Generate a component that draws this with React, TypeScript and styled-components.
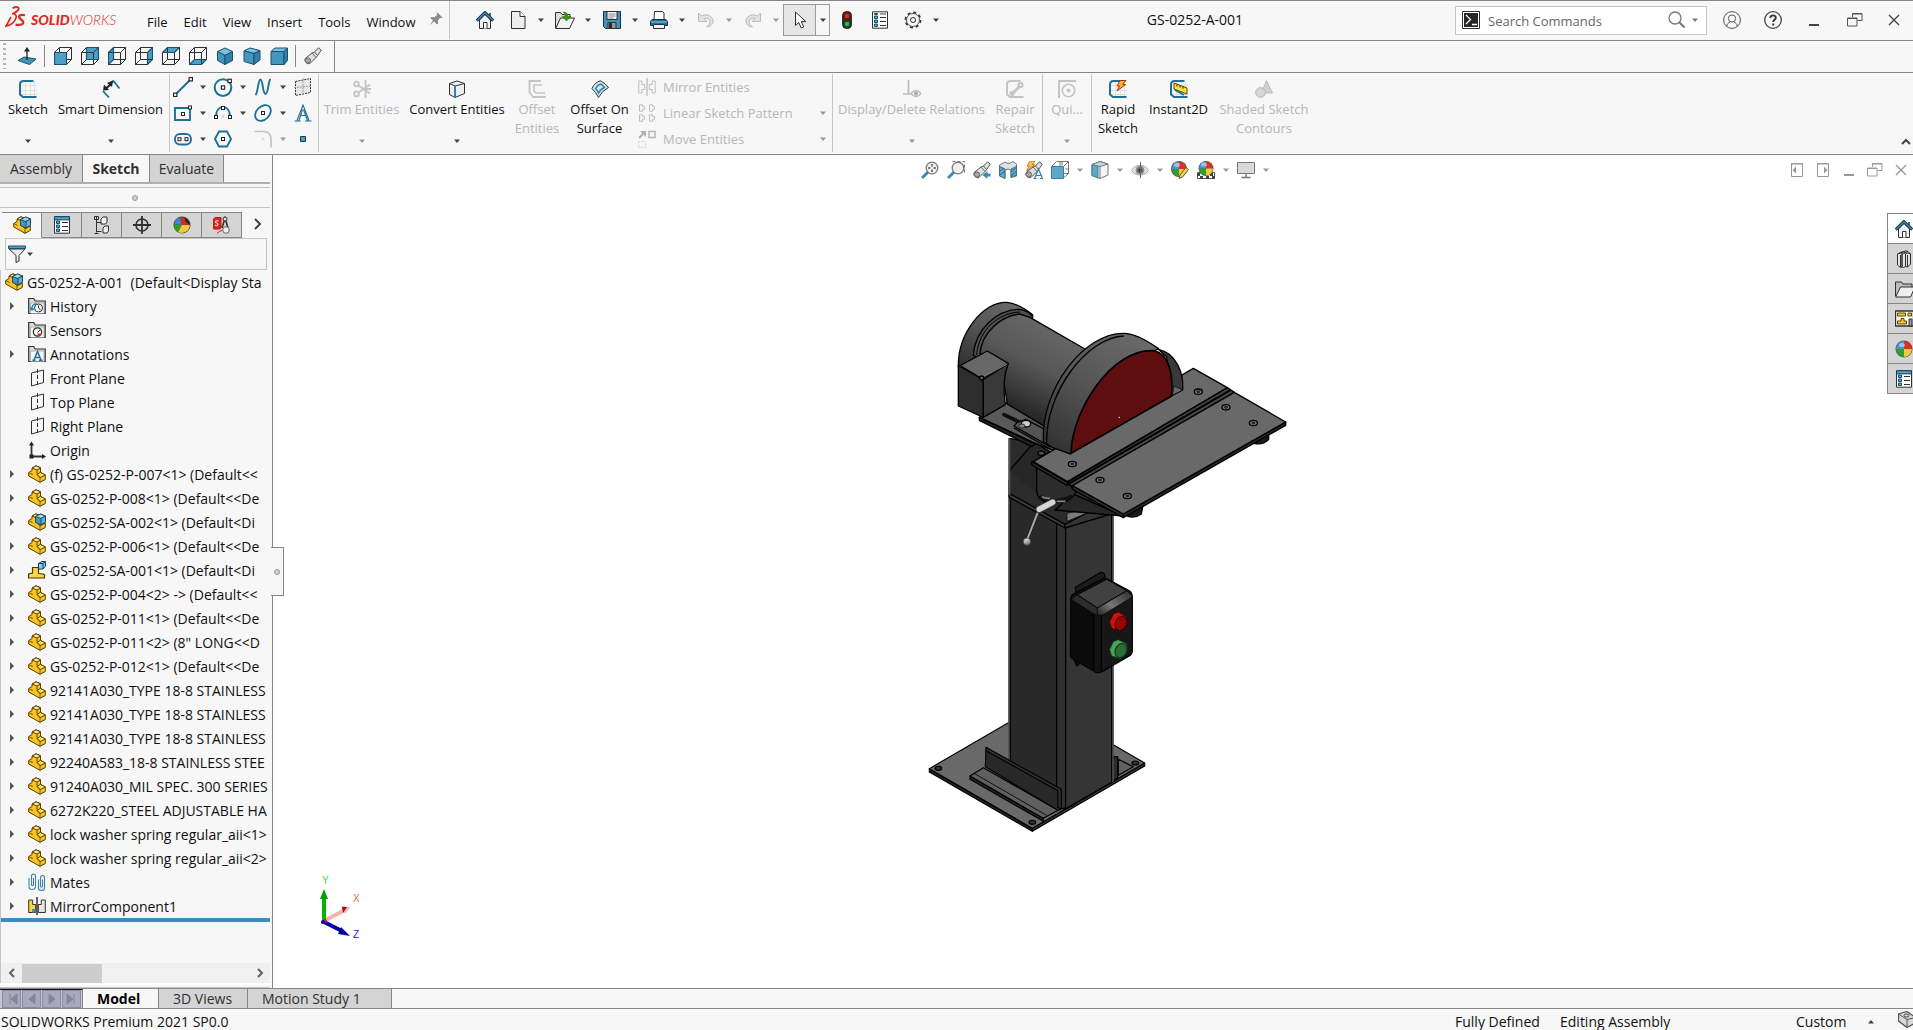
import React from "react";
import styled, { createGlobalStyle, css } from "styled-components";

const LINE = "#868686";
const SOFT = "#c6c6c6";
const PANEL = "#f7f7f7";
const TAB = "#d4d4d4";
const INK = "#303030";
const BLUE = "#1f7099";
const MID = "#5aa9cf";
const DIM = "#c4c4c4";

const Global = createGlobalStyle`
  *, *::before, *::after { box-sizing: border-box; }
  html, body { margin: 0; height: 100%; overflow: hidden; }
  body { font-family: "Open Sans", "Noto Sans", sans-serif; font-size: 14px; color: #101010; background: ${PANEL}; }
  #root { height: 100%; }
  button, input { font: inherit; color: inherit; margin: 0; padding: 0; border: 0; background: none; border-radius: 0; }
  ul { list-style: none; margin: 0; padding: 0; }
  h1 { margin: 0; font: inherit; }
  svg { display: block; flex: none; }
`;

/* ---------- layout ---------- */

const App_ = styled.div`
  display: flex;
  flex-direction: column;
  height: 100vh;
  overflow: hidden;
  background: ${PANEL};
  white-space: nowrap;
`;

const TitleBar = styled.header`
  display: flex;
  align-items: center;
  height: 41px;
  flex: none;
  padding-bottom: 1px;
  border-top: 1px solid ${LINE};
  border-bottom: 1px solid ${LINE};
`;

const Brand = styled.div`
  display: flex;
  align-items: center;
  gap: 5px;
  width: 139px;
  padding: 0 0 6px 5px;
  color: #da2a22;
  font-family: Lato, sans-serif;
  font-size: 14px;
  font-style: italic;
  font-weight: 300;
  line-height: 20px;
  b { font-weight: 900; }
  span { padding-top: 6px; }
`;

const Menu = styled.nav`
  display: flex;
  align-items: center;
  align-self: stretch;
  border-right: 1px solid ${SOFT};
  width: 311px;
  font-size: 13px;
`;

const MenuItem = styled.button`
  padding: 3px 8px 0;
  line-height: 20px;
`;

const Pin = styled.button`
  margin-left: auto;
  padding: 0 6px 2px 0;
`;

const QuickBar = styled.div`
  display: flex;
  align-items: center;
  padding-left: 18px;
`;

const IconButton = styled.button<{ $w?: number; $h?: number }>`
  display: flex;
  align-items: center;
  justify-content: center;
  flex: none;
  width: ${(p) => p.$w ?? 26}px;
  height: ${(p) => p.$h ?? 26}px;
`;

const SelectBox = styled.div`
  display: flex;
  height: 32px;
  border: 1px solid #9a9a9a;
  width: 47px;
  ${IconButton} { height: 30px; }
  ${IconButton}:first-child { background: #e6e6e6; border-right: 1px solid #9a9a9a; }
`;

const DocTitle = styled.h1`
  flex: 1;
  padding-right: 8px;
  text-align: center;
  font-size: 14px;
  line-height: 20px;
`;

const SearchBox = styled.label`
  display: flex;
  align-items: center;
  width: 252px;
  height: 29px;
  background: #fff;
  border: 1px solid ${SOFT};
  padding: 0 2px 0 6px;
  margin-right: 4px;
  input {
    flex: 1;
    min-width: 0;
    padding: 1px 0 0 8px;
    font-size: 13px;
    outline: none;
  }
  input::placeholder { color: #666; opacity: 1; }
`;

const ViewBar = styled.div`
  height: 32px;
  flex: none;
  border-bottom: 1px solid ${LINE};
`;

const ViewGroup = styled.div`
  display: flex;
  align-items: center;
  width: 335px;
  height: 31px;
  border-right: 1px solid ${LINE};
  padding: 0 0 1px 3px;
`;

const Grip = styled.span`
  width: 3px;
  height: 26px;
  margin-right: 7px;
  background: repeating-linear-gradient(#b5b5b5 0 2px, transparent 2px 5px);
`;

const Rule = styled.span<{ $m?: number }>`
  width: 1px;
  height: 22px;
  margin: 0 ${(p) => p.$m ?? 3}px;
  background: ${LINE};
`;

const Ribbon = styled.section`
  display: flex;
  height: 82px;
  flex: none;
  border-bottom: 1px solid ${LINE};
  font-size: 13px;
`;

const Group = styled.div<{ $pad?: number; $last?: boolean }>`
  display: flex;
  height: 78px;
  margin-top: 1px;
  padding-right: ${(p) => p.$pad ?? 0}px;
  border-right: ${(p) => (p.$last ? 0 : 1)}px solid ${SOFT};
`;

const BigButton = styled.button<{ $w: number; $off?: boolean }>`
  display: flex;
  flex-direction: column;
  align-items: center;
  flex: none;
  width: ${(p) => p.$w}px;
  padding-top: 6px;
  line-height: 19px;
  color: ${(p) => (p.$off ? "#b6b6b6" : "#101010")};
`;

const BigLabel = styled.span`
  height: 38px;
  margin: 2px 0 0;
  white-space: pre-line;
  text-align: center;
`;

const BigArrow = styled.span`
  display: flex;
  height: 6px;
  align-items: center;
`;

const ToolGrid = styled.div`
  display: grid;
  grid-template-columns: repeat(3, 26px 14px) 28px;
  grid-auto-rows: 26px;
`;

const RowList = styled.div`
  display: flex;
  flex-direction: column;
  width: 197px;
`;

const RowTool = styled.button`
  display: flex;
  align-items: center;
  height: 26px;
  gap: 7px;
  padding: 0 6px 0 3px;
  color: #b6b6b6;
  span:last-child { margin-left: auto; }
`;

const RibbonEnd = styled.div`
  display: flex;
  flex: 1;
  align-items: flex-end;
  justify-content: flex-end;
  padding-bottom: 2px;
`;

const Work = styled.main`
  display: flex;
  flex: 1;
  min-height: 0;
`;

const Side = styled.aside`
  position: relative;
  display: flex;
  flex-direction: column;
  width: 273px;
  flex: none;
  border-right: 1px solid ${LINE};
  background: ${PANEL};
`;

const CommandTabs = styled.div`
  display: flex;
  height: 29px;
  width: 270px;
  border-bottom: 2px solid #a9b2b5;
`;

const CommandTab = styled.button<{ $w: number; $on?: boolean }>`
  width: ${(p) => p.$w}px;
  border-right: 1px solid ${LINE};
  background: ${(p) => (p.$on ? PANEL : TAB)};
  font-weight: ${(p) => (p.$on ? 700 : 400)};
  color: #303030;
`;

const Splitter = styled.div`
  display: flex;
  align-items: center;
  justify-content: center;
  height: 21px;
  width: 270px;
  margin-top: 3px;
  border-top: 1px solid ${SOFT};
  border-bottom: 1px solid ${SOFT};
`;

const Dot = styled.span`
  width: 6px;
  height: 6px;
  border-radius: 3px;
  border: 1px solid #999;
  background: #d0d0d0;
`;

const ManagerTabs = styled.div`
  display: flex;
  height: 26px;
  width: 270px;
  margin-top: 4px;
  padding-left: 2px;
`;

const ManagerTab = styled.button<{ $on?: boolean }>`
  display: flex;
  align-items: center;
  justify-content: center;
  flex: none;
  width: 40px;
  border: 1px solid ${LINE};
  border-left: 0;
  background: ${(p) => (p.$on ? PANEL : TAB)};
  ${(p) => p.$on && css`border-bottom-color: ${PANEL};`}
`;

const Filter = styled.div`
  display: flex;
  align-items: center;
  height: 32px;
  width: 262px;
  margin-left: 5px;
  padding-left: 2px;
  border: 1px solid ${SOFT};
  button { display: flex; align-items: center; gap: 1px; }
  input { flex: 1; min-width: 0; align-self: stretch; outline: none; }
`;

const TreePane = styled.div`
  display: flex;
  flex-direction: column;
  flex: 1;
  min-height: 0;
  width: 270px;
  overflow: hidden;
  border-left: 1px solid ${SOFT};
`;

const TreeRow = styled.li<{ $root?: boolean }>`
  display: flex;
  align-items: center;
  height: 24px;
  padding-left: ${(p) => (p.$root ? 4 : 7)}px;
  white-space: pre;
`;

const Twist = styled.button`
  display: flex;
  align-items: center;
  justify-content: center;
  flex: none;
  width: 8px;
  height: 16px;
  margin-right: 12px;
`;

const NodeLabel = styled.span`
  margin-left: 4px;
`;

const Rollback = styled.div`
  height: 4px;
  flex: none;
  background: #3a8cc6;
`;

const HScroll = styled.div`
  display: flex;
  align-items: center;
  margin-top: auto;
  height: 20px;
  flex: none;
  background: #f0f0f0;
`;

const Thumb = styled.span`
  width: 80px;
  height: 19px;
  margin-right: auto;
  background: #cdcdcd;
`;

const SideFoot = styled.div`
  height: 5px;
  flex: none;
  width: 270px;
  border-top: 2px solid #fff;
  border-bottom: 1px solid ${SOFT};
`;

const Handle = styled.button`
  position: absolute;
  left: 271px;
  top: 392px;
  width: 13px;
  height: 49px;
  display: flex;
  align-items: center;
  justify-content: center;
  z-index: 1;
  background: ${PANEL};
  border: 1px solid ${LINE};
  border-left: 0;
`;

const Viewport = styled.section`
  position: relative;
  flex: 1;
  min-width: 0;
  overflow: hidden;
  background: #fff;
`;

const Scene = styled.svg`
  position: absolute;
  inset: 0;
  width: 100%;
  height: 100%;
`;

const Triad = styled.svg`
  position: absolute;
  left: 37px;
  bottom: 43px;
`;

const HeadsUp = styled.div`
  position: relative;
  display: flex;
  justify-content: center;
  padding-top: 2px;
  padding-left: 4px;
`;

const DocControls = styled.div`
  position: absolute;
  right: -1px;
  top: 2px;
  display: flex;
`;

const TaskPane = styled.nav`
  position: absolute;
  right: 0;
  top: 58px;
  width: 26px;
  border-left: 1px solid ${LINE};
  border-top: 1px solid ${LINE};
`;

const TaskButton = styled.button<{ $on?: boolean }>`
  display: flex;
  align-items: center;
  width: 100%;
  height: 30px;
  padding-left: 7px;
  overflow: hidden;
  border-bottom: 1px solid ${LINE};
  background: ${(p) => (p.$on ? "#fff" : TAB)};
`;

const SheetBar = styled.nav`
  display: flex;
  height: 21px;
  flex: none;
  border-top: 1px solid ${LINE};
  border-bottom: 1px solid ${LINE};
`;

const SheetNav = styled.div`
  display: flex;
  gap: 1px;
  width: 83px;
  padding: 0 1px 0 2px;
  background: #c6c6d2;
  border-top: 1px solid #111;
  border-right: 1px solid ${LINE};
`;

const SheetStep = styled.button`
  display: flex;
  flex: 1;
  align-items: center;
  justify-content: center;
  background: #a9a9bd;
  border: 1px solid #8c8ca0;
`;

const SheetTab = styled.button<{ $w: number; $on?: boolean }>`
  width: ${(p) => p.$w}px;
  padding-left: 14px;
  text-align: left;
  line-height: 19px;
  border-right: 1px solid ${LINE};
  background: ${(p) => (p.$on ? PANEL : TAB)};
  font-weight: ${(p) => (p.$on ? 700 : 400)};
  color: ${(p) => (p.$on ? "#000" : "#303030")};
`;

const Status = styled.footer`
  display: flex;
  height: 21px;
  flex: none;
  padding: 3px 0 0 1px;
  line-height: 20px;
  overflow: hidden;
`;

const Product = styled.span`
  margin-right: auto;
`;

const StatusCell = styled.span<{ $w: number }>`
  width: ${(p) => p.$w}px;
`;

const StatusMenu = styled.button`
  display: flex;
  align-items: center;
  gap: 22px;
  width: 105px;
  height: 20px;
`;

/* ---------- icons ---------- */

type IconProps = { s?: number; children: React.ReactNode };
const Ic = ({ s = 18, children }: IconProps) => (
  <svg width={s} height={s} viewBox="0 0 18 18" fill="none" stroke={INK} strokeWidth="1" aria-hidden="true">
    {children}
  </svg>
);

const Caret = ({ c = "#404040", up = false }: { c?: string; up?: boolean }) => (
  <svg width="6" height="4" viewBox="0 0 6 4" aria-hidden="true">
    <path d={up ? "M0 3.5h6L3 0z" : "M0 .5h6L3 4z"} fill={c} />
  </svg>
);

const Logo = () => (
  <svg width="21" height="22" viewBox="0 0 21 22" fill="none" stroke="#da2a22" aria-hidden="true">
    <path d="M7.5 2.2C11 .6 14 .7 13.6 2.9 13.3 4.700 10.500 6.500 8.500 7.500" strokeWidth="2" />
    <path d="M7 7.600C10.500 7.700 12 9.500 10.800 12.500 9.300 16.500 5 19.200 1 20.300L6 11" strokeWidth="1.700" />
    <path d="M20 9.300C17 8.500 13.800 9 14 11 14.300 13 19 14.500 18.300 17 17.500 19.300 13.500 19 10.500 18.600" strokeWidth="2.200" />
  </svg>
);

const House = () => (
  <Ic>
    <path d="M3.500 9v8.500h11V9L9 3.500z" fill="#f2f2f2" />
    <path d="M7.500 17.500v-6h3.500v6" fill="#fff" />
    <path d="M.8 9.600 9 1.600l8.200 8" stroke="#12374a" strokeWidth="3" />
    <path d="M1.300 9.300 9 1.900l7.700 7.400" stroke="#3d8fb8" strokeWidth="1.200" />
    <path d="M14 2v3" stroke="#12374a" strokeWidth="1.500" />
  </Ic>
);
const NewDoc = () => (
  <Ic>
    <path d="M2.500.5h8.500l5 5v12H2.500z" fill="#eee" />
    <path d="M11 .5v5h5" fill="#fff" />
  </Ic>
);
const Open = () => (
  <svg width="20" height="18" viewBox="0 0 20 18" fill="none" stroke={INK} aria-hidden="true">
    <path d="M.5 17V1.500h5l1.500 2h8V7" fill="#ddd" />
    <path d="M.7 17.500 5.500 7h14l-5 10.500z" fill="#f1f1f1" />
    <path d="M8 1c3.500 0 5 1.500 5 4.500h2.800L11.500 10 7.300 5.500H10C10 3 9.500 2 8 1z" fill="#3d9a10" stroke="#2c7808" strokeWidth=".6" />
  </svg>
);
const Save = () => (
  <Ic>
    <path d="M.5.5h17v17H2.500l-2-2z" fill="#4193bc" stroke="#123748" />
    <path d="M4 .5h10v8H4z" fill="#f5f5f5" />
    <path d="M5.500 3h7M5.500 5h7M5.500 7h5" stroke="#888" />
    <path d="M5 11.500h8v6H5z" fill="#999" />
    <path d="M6.500 12.500h2v5h-2z" fill="#222" />
  </Ic>
);
const Print = () => (
  <Ic>
    <path d="M4.500.5h8l1.500 1.500v6.500H4z" fill="#fff" />
    <path d="M2 8.500h14l1.500 2v4H.5v-4z" fill={BLUE} stroke="#123748" />
    <path d="M1 11h16" stroke="#8fcbe6" />
    <path d="M3.500 13.500h11v4h-11z" fill="#f4f4f4" />
  </Ic>
);
const Undo = ({ flip = false }) => (
  <Ic>
    <g transform={flip ? "matrix(-1 0 0 1 18 0)" : undefined} fill="#e2e2e2" stroke="#b9b9b9">
      <path d="M1.500 2v8.500H10L7 7.700c4-1.500 7 1 5.500 5.300L9.500 16c6-.5 8-5.500 5.500-9C12.500 3.500 8 3 4.500 5z" />
    </g>
  </Ic>
);
const Cursor = () => (
  <Ic>
    <path d="M4.500 1v13.500l3.300-3 2.400 5.500 2.500-1-2.400-5.400h4.500z" fill="#fff" />
  </Ic>
);
const Traffic = () => (
  <Ic>
    <rect x="4.500" y=".5" width="9" height="17" rx="4" fill="#2a2a2a" />
    <circle cx="9" cy="5" r="2.800" fill="#e5281c" stroke="#7d0d08" />
    <circle cx="9" cy="13" r="2.800" fill="#3fae3a" stroke="#14520f" />
  </Ic>
);
const ListIcon = ({ head = false }) => (
  <Ic>
    <path d="M1.500.8h15v16.400h-15z" fill="#fff" />
    {head && <path d="M1.500.8h15v3h-15z" fill={MID} stroke="#12374a" />}
    <path d="M3.500 5h3v2.500h-3zM3.500 9h3v2.500h-3zM3.500 13h3v2.500h-3z" fill={MID} stroke="#12506f" />
    <path d="M9 6.500h6M9 10.500h6M9 14.500h6" />
    {!head && <path d="M3.500 2.500h3v1h-3zM9 3h6" stroke="#12506f" />}
  </Ic>
);
const Gear = () => (
  <Ic>
    <circle cx="9" cy="9" r="7.500" strokeWidth="1.800" strokeDasharray="3 2.890" />
    <circle cx="9" cy="9" r="6.500" fill="#f7f7f7" strokeWidth="1" stroke="#555" />
    <circle cx="9" cy="9" r="2.500" />
  </Ic>
);
const PinIcon = () => (
  <svg width="14" height="14" viewBox="0 0 14 14" fill="#8b8b8b" aria-hidden="true">
    <path d="M8.500.500 13.500 5.500 12 6.300 11 5.800 9 8.500 9.200 11.500 8 12.500 5 9.500 .5 13.500 4 8.500 1.500 6 2.500 5 5.500 5.200 8.200 3 7.700 2z" />
  </svg>
);
const Prompt = () => (
  <Ic>
    <path d="M.5.5h17v17H.5z" fill="#fff" />
    <path d="M2 2h14v14H2z" fill="#23272c" stroke="none" />
    <path d="m4 4 4.500 4.500L4 13M10 13.500h5" stroke="#fff" strokeWidth="1.300" />
  </Ic>
);
const Lens = () => (
  <Ic>
    <circle cx="8" cy="7" r="6" stroke="#777" strokeWidth="1.300" />
    <path d="m12.500 11.500 5 5" stroke="#777" strokeWidth="2" />
  </Ic>
);
const User = () => (
  <Ic>
    <circle cx="9" cy="9" r="8.400" stroke="#555" />
    <circle cx="9" cy="7.500" r="3.600" stroke="#555" />
    <path d="M4 15c0-2 1-3 3-4M14 15c0-2-1-3-3-4" stroke="#555" />
  </Ic>
);
const Help = () => (
  <Ic>
    <circle cx="9" cy="9" r="8.300" strokeWidth="1.300" stroke="#444" />
    <path d="M6.300 7c0-3.500 5.500-3.400 5.500-.3C11.800 8.800 9.200 8.700 9.200 11" strokeWidth="1.900" stroke="#333" />
    <path d="M8.200 12.500h2v2h-2z" fill="#333" stroke="none" />
  </Ic>
);
const Mini = ({ c = "#444" }) => (
  <Ic><path d="M4 14h10" stroke={c} strokeWidth="2" /></Ic>
);
const Restore = ({ c = "#555" }) => (
  <Ic>
    <path d="M6.500 6V2.500h9.500v7h-4.500M6 3h10" stroke={c} />
    <path d="M1.500 7h9.500v8H1.500z" stroke={c} />
    <path d="M1.500 7.500h9.500" stroke={c} />
  </Ic>
);
const Close = ({ c = "#444" }) => (
  <Ic><path d="m4 4 10 10M14 4 4 14" stroke={c} strokeWidth="1.400" /></Ic>
);
const PaneArrow = ({ right = false }) => (
  <Ic>
    <path d="M3.500 2.500h11v13h-11zM3 3h12" stroke="#999" />
    <path d={right ? "M10 5.500v7l3.500-3.500z" : "M8 5.500v7L4.500 9z"} fill="#999" stroke="none" />
  </Ic>
);

const NormalTo = () => (
  <Ic>
    <path d="M0 13.500 6 10l12 2-6.500 5.500z" fill="#3f93bb" stroke="#17526f" />
    <path d="M9 13V2" stroke="#222" strokeWidth="1.300" />
    <path d="M6 4.500 9 0l3 4.500z" fill="#222" stroke="none" />
  </Ic>
);

const faces: Record<string, string> = {
  front: "M.5 5.500h12v12H.5z",
  back: "M5.500.5h12v12h-12z",
  left: "M.5 5.500l5-5v12l-5 5z",
  right: "M12.500 5.500l5-5v12l-5 5z",
  top: "M.5 5.500l5-5h12l-5 5z",
  bottom: "M.5 17.500l5-5h12l-5 5z",
};
const ViewCube = ({ face }: { face: string }) => (
  <Ic>
    {face !== "front" && <path d={faces[face]} fill="#4d9fc6" stroke="none" />}
    <path d="M5.500.5h12v12h-12zM.5 5.500l5-5M12.500 5.500l5-5M12.500 17.500l5-5M.5 17.500l5-5" />
    <path d="M.5 5.500h12v12H.5z" fill={face === "front" ? "#4d9fc6" : "none"} />
    <path d={faces[face]} stroke="#17526f" strokeWidth="1.200" />
  </Ic>
);
const SolidCube = ({ kind }: { kind: "iso" | "di" | "tri" }) => {
  const g = {
    iso: ["M9 1 16.500 4.500 9 8.500 1.500 4.500z", "M1.500 4.500 9 8.500v9L1.500 13.500z", "M16.500 4.500 9 8.500v9l7.500-4z"],
    di: ["M7 1 17 3.500 11 6.500 1 3.800z", "M1 3.800 11 6.500v11L1 14.500z", "M17 3.500 11 6.500v11l6-4.500z"],
    tri: ["M5 1h12.500L14 4.500H1z", "M1 4.500h13v13H1z", "M17.500 1 14 4.500v13l3.500-4z"],
  }[kind];
  return (
    <Ic>
      <path d={g[0]} fill="#7cc1e0" stroke="#17526f" />
      <path d={g[1]} fill="#4596bf" stroke="#17526f" />
      <path d={g[2]} fill="#3580a8" stroke="#17526f" />
    </Ic>
  );
};
const Scope = ({ extra }: { extra?: React.ReactNode }) => (
  <Ic>
    <path d="M14.500.800 17.300 3.200 14 8 12 10.500 6 16.500C3 17.500 0 14.500 1 11.700L8 6l2.500-1z" fill="#e0e0e0" stroke="#555" />
    <path d="m8 6 4 4.500M10.500 5 13.500 8.500" stroke="#666" />
    <circle cx="4" cy="13.500" r="2.600" fill="#aaa" stroke="#666" />
    {extra}
  </Ic>
);

const SketchBase = ({ children, off = false }: { children?: React.ReactNode; off?: boolean }) => (
  <Ic>
    {!off && <path d="M6.500 2v14M11.500 2v14M15.500 2v14M2 5.500h16M2 10.500h16M2 14.500h16" stroke="#dedede" />}
    <path d="M14.500 1H4.500Q1 1 1 4.500v10L4 17h13.500" stroke={off ? DIM : BLUE} strokeWidth="2" />
    {children}
  </Ic>
);
const Bolt = ({ x = 0 }) => (
  <path transform={`translate(${x} 0)`} d="M11 .5h6L13.500 4.500h3L8 11 10.500 6H8z" fill="#ffb32c" stroke="#a8300a" />
);
const SmartDim = () => (
  <Ic>
    <path d="M8.500 3.500l3-2.500 6 7.500M1 11l6 6.500" stroke={BLUE} strokeWidth="1.800" />
    <path d="M3.500 9 9.500 3.500" strokeWidth="2" stroke="#222" />
    <path d="M1 10.500 2 4.500 7 10zM5 3 11 .5 10 7z" fill="#222" stroke="none" />
  </Ic>
);
const Knot = ({ x, y }: { x: number; y: number }) => (
  <rect x={x - 1.500} y={y - 1.500} width="3" height="3" fill="#fff" stroke="#222" />
);
const LineTool = () => (
  <Ic s={20}><path d="M2 16 16 2" stroke={BLUE} strokeWidth="1.800" /><Knot x={2} y={16} /><Knot x={16} y={2} /></Ic>
);
const CircleTool = () => (
  <Ic s={20}><circle cx="9" cy="9.500" r="7.500" stroke={BLUE} strokeWidth="1.800" /><Knot x={9} y={9.500} /><Knot x={15} y={3.500} /></Ic>
);
const Spline = () => (
  <Ic><path d="M1.500 17C4 15 4 1.500 6.500 1.500S8.500 16 11.500 16 14 3 16.500 1" stroke={BLUE} strokeWidth="1.900" /></Ic>
);
const PlaneTool = () => (
  <Ic>
    <path d="M1.500 3.500 16.500.500v14l-15 3z" fill="#e8e8e8" strokeDasharray="2 1" />
    <path d="M9 0v18M0 9.500 18 8" stroke="#999" strokeDasharray="2 1" />
  </Ic>
);
const RectTool = () => (
  <Ic><path d="M1 4h15v12H1z" stroke={BLUE} strokeWidth="1.900" /><Knot x={9} y={10} /><Knot x={16} y={3.500} /></Ic>
);
const ArcTool = () => (
  <Ic>
    <path d="M2 12C2 0 16 0 16 12" stroke={BLUE} strokeWidth="1.800" />
    <path d="m7.500 11 3 3M10.500 11l-3 3" stroke="#c8c8c8" />
    <Knot x={2} y={13} /><Knot x={16} y={13} /><Knot x={9} y={4} />
  </Ic>
);
const Ellipse = () => (
  <Ic><ellipse cx="9" cy="9" rx="9" ry="6.500" transform="rotate(-45 9 9)" stroke={BLUE} strokeWidth="1.800" /><Knot x={9} y={9} /></Ic>
);
const TextTool = () => (
  <Ic>
    <path d="M.5 17h6M11 17h6.500M3 16.500 9 1l6 15.500M6 11.500h6M8.500 5.500 5 16.500M9.500 5.500l4 11" stroke={BLUE} strokeWidth="1.100" />
  </Ic>
);
const Slot = () => (
  <Ic><rect x="1" y="4" width="16" height="10.500" rx="5" stroke={BLUE} strokeWidth="1.900" /><Knot x={5.500} y={9.200} /><Knot x={12.500} y={9.200} /></Ic>
);
const Polygon = () => (
  <Ic><path d="M5 1.500h8L17 9l-4 7.500H5L1 9z" stroke={BLUE} strokeWidth="1.900" /><Knot x={9} y={9} /></Ic>
);
const Fillet = () => (
  <Ic>
    <path d="M.5 1.500h9q7.500 0 7.500 8v8" stroke={DIM} strokeWidth="1.700" />
    <path d="m7.500 7.500 3 3M10.500 7.500l-3 3" stroke="#dcdcdc" />
  </Ic>
);
const PointTool = () => (
  <Ic><path d="M6.500 6.500h5v5h-5z" fill="#4d9fc6" stroke="#123f57" /></Ic>
);
const Trim = () => (
  <Ic>
    <g stroke={DIM} strokeWidth="1.800">
      <circle cx="3.500" cy="4" r="2.300" /><circle cx="3.500" cy="14" r="2.300" />
      <path d="M5.500 5.500 17 13.500M5.500 12.500 17 4.500M12.500 0v18M9 9h9" />
    </g>
  </Ic>
);
const Convert = () => (
  <Ic>
    <path d="M1.500 3.500 9 1l7.500 2.500v10L7 17.500l-5.500-3z" fill="#eee" />
    <path d="M1.500 3.500 7 6l9.500-2.500" />
    <path d="M7 6v11.500" stroke="#2a84b1" strokeWidth="2" />
  </Ic>
);
const Offset = () => (
  <Ic>
    <path d="M13 1H1.500v11.500L5 17h12.500" stroke={DIM} strokeWidth="1.800" />
    <path d="M14 5H6v6l2 2h9" stroke={DIM} strokeWidth="1.600" />
  </Ic>
);
const OffsetSurf = () => (
  <Ic>
    <path d="M1 8.500Q4 2 9.500.800q5 2.500 8 6.700Q11 10.500 7.500 17.500 5 12.500 1 8.500z" fill="#d9e6ec" />
    <path d="M4.500 8.500Q6.500 5 9.500 4q2 1 4 3.500Q9.500 9 7.500 13 6.500 10.500 4.500 8.500z" stroke="#2a84b1" strokeWidth="1.500" />
  </Ic>
);
const Mirror = () => (
  <Ic>
    <path d="M9 0v18" stroke="#aaa" />
    <path d="M.8 3h3v3.500h3v5h-3V15h-3zM17.200 3h-3v3.500h-3v5h3V15h3z" stroke="#bdbdbd" />
  </Ic>
);
const Linear = () => (
  <Ic>
    {[[0, 0], [10, 0], [0, 10], [10, 10]].map(([x, y]) => (
      <path key={`${x}-${y}`} transform={`translate(${x} ${y})`} d="M1.500.800h3v1.500h2v3h-2v2h-3z" stroke="#bdbdbd" />
    ))}
  </Ic>
);
const Move = () => (
  <Ic>
    <path d="M1 8 6 3" stroke="#b0b0b0" strokeWidth="2" />
    <path d="M2 1h6v6z" fill="#b0b0b0" stroke="none" />
    <path d="M11 1.500h6v6h-6z" stroke="#b5b5b5" strokeWidth="1.500" />
    <path d="M.5 11.500h7v6h-7z" stroke="#d5d5d5" strokeDasharray="2 1" />
  </Ic>
);
const Relations = () => (
  <Ic>
    <path d="M5.500 0v14M0 14h9" stroke="#bbb" strokeWidth="1.700" />
    <path d="M8 13.500q5-6 10 0-5 6-10 0z" fill="#fff" stroke="#bbb" strokeWidth="1.300" />
    <circle cx="13" cy="13.500" r="2" fill="#aaa" stroke="none" />
  </Ic>
);
const Repair = () => (
  <SketchBase off>
    <path d="M5.500 14.500 14 6" stroke={DIM} strokeWidth="3" />
    <circle cx="14.500" cy="5" r="2" stroke={DIM} strokeWidth="2" />
    <circle cx="6" cy="13.500" r="1.700" stroke={DIM} strokeWidth="1.800" />
  </SketchBase>
);
const QuickSnap = () => (
  <Ic>
    <path d="M1 18V1h17" stroke={DIM} strokeWidth="2" />
    <circle cx="10.500" cy="10.500" r="6.200" stroke={DIM} strokeWidth="1.600" />
    <circle cx="10.500" cy="10.500" r="2" fill={DIM} stroke="none" />
  </Ic>
);
const Instant = () => (
  <SketchBase>
    <path d="M4 3 17 8v6L4 9z" fill="#ffdf3a" stroke="#5b4600" />
    <path d="M7 4.500v2M10 5.500v2M13 6.700v2" stroke="#222" />
    <path d="m5 10 9 5" stroke={BLUE} strokeWidth="2" />
  </SketchBase>
);
const Contours = () => (
  <Ic>
    <path d="m11.500.500 6 12.500h-11z" fill="#d0d0d0" stroke="#bbb" />
    <circle cx="5.500" cy="12.500" r="4.800" fill="#d6d6d6" stroke="#b5b5b5" />
  </Ic>
);

const ZoomFit = ({ area = false }) => (
  <Ic>
    {area && <path d="M5.500.5h12v12" stroke="#777" strokeDasharray="3 2" />}
    <path d="m1 17 6-6" stroke="#3c89b0" strokeWidth="3" />
    <circle cx={11} cy="7" r="5.800" fill="#eef1f3" stroke="#777" strokeWidth="1.300" />
    {!area && <path d="M11 3v8M7 7h8" stroke="#555" strokeWidth="1.500" strokeDasharray="2.500 3" />}
  </Ic>
);
const Section = () => (
  <Ic>
    <path d="M.5 4 6 1q4 3 8-.5l3.500 2.500v12L12 16.500V9Q9 7 6 9v8L.5 14.500z" fill="#e0e0e0" stroke="#777" />
    <path d="M.5 5.500 6 8v9.500L.5 15zM12 8l5.500-2.500V14L12 16.500z" fill="#63a9c9" stroke="#37718c" />
    <path d="m1 10 4-3M1 14l5-4M12.500 11l4-4M12.500 15l5-5" stroke="#2a5f78" />
  </Ic>
);
const DynAnno = () => (
  <Scope extra={<><path d="M5 0h5L7.500 3.500H10L1.500 10 4 5H2z" fill="#ffc04a" stroke="#b96a10" strokeWidth=".8" /><path d="m9.500 17.500 4-9.500 4 9.500M11 14.500h5M8.500 17.500h3M15 17.500h3" stroke="#2f7fa7" strokeWidth="1.200" /></>} />
);
const Orient = () => (
  <Ic>
    <path d="M5.500.500h12v12h-5M.5 5.500l5-5M12.500 5.500l5-5M12.500 17l5-4.500M9 .5v5M14.500 8h3M11 .5v4" stroke="#777" />
    <path d="M.5 5.500h12v12H.5z" fill="#5ea8c9" stroke="#3f7f9c" />
  </Ic>
);
const DisplayStyle = () => (
  <Ic>
    <path d="M1 3.500 9 .5l8 2.500v11L9 17.500 1 14.500z" fill="#f4f4f4" stroke="#777" />
    <path d="M1 3.500 7 5v12L1 14.500z" fill="#5ea8c9" stroke="#3f7f9c" />
    <path d="M1 3.500 9 .5l8 2.500-8 2.500z" fill="#b9dcea" stroke="#777" />
    <path d="M9 5.500v12" stroke="#777" />
  </Ic>
);
const Eye = () => (
  <Ic>
    <path d="M.5 9.500C4 2.500 14 2.500 17.500 9.500 14 15.500 4 15.500.5 9.500z" fill="#e2e2e2" stroke="#a8a8a8" />
    <circle cx="9" cy="9.200" r="4" fill="#777" stroke="#999" />
    <circle cx="9" cy="9.200" r="1.800" fill="#333" stroke="none" />
    <path d="M9.500 1v16" stroke="#666" />
  </Ic>
);
const Ball = ({ x = 9, y = 9, r = 8.500 }) => (
  <g stroke="none">
    <circle cx={x} cy={y} r={r} fill="#555" />
    <path d={`M${x} ${y}V${y - r + .6}A${r - .6} ${r - .6} 0 0 0 ${x - r + .6} ${y}z`} fill="#4f8fd2" />
    <path d={`M${x} ${y}V${y - r + .6}A${r - .6} ${r - .6} 0 0 1 ${x + r - .6} ${y}z`} fill="#dd2f26" />
    <path d={`M${x} ${y}V${y + r - .6}A${r - .6} ${r - .6} 0 0 1 ${x - r + .6} ${y}z`} fill="#2f9e2c" />
    <path d={`M${x} ${y}V${y + r - .6}A${r - .6} ${r - .6} 0 0 0 ${x + r - .6} ${y}z`} fill="#f2c73a" />
    <ellipse cx={x - 2} cy={y - 4} rx="3" ry="2" fill="#fff" opacity=".45" />
  </g>
);
const DisplayBall = () => (
  <Ic>
    <g stroke="none">
      <circle cx="9" cy="9" r="8.500" fill="#3a3a3a" />
      <path d="M9 9 1.200 8A8 8 0 0 1 7 1.300z" fill="#3f84cf" />
      <path d="M9 9 7 1.300 12 1.500 16 9z" fill="#d9261f" />
      <path d="M9 9 1.200 8A8 8 0 0 0 5 16z" fill="#2f9e2c" />
      <path d="M9 9 5 16A8 8 0 0 0 16.800 9z" fill="#f2c73a" />
      <path d="M11 1.500Q16 4 16.500 8.500L13 6z" fill="#222" />
    </g>
  </Ic>
);
const EditLook = () => (
  <Ic><Ball x={8} y={8} r={8} /><path d="M8 17.500 9 14l6-7.500 2.500 2-6 7.500z" fill="#f4d35a" stroke="#6a5a20" /></Ic>
);
const SceneIcon = () => (
  <Ic>
    <path d="M.5 11.500h17v6H.5z" fill="#fff" stroke="#555" />
    <path d="M0 12h3v3H0zM3 15h3v3H3zM9 15h3v3H9zM15 15h3v3h-3zM13 12h3v3h-3z" fill="#444" stroke="none" />
    <Ball x={9} y={7.500} r={7.500} />
  </Ic>
);
const Screen = () => (
  <Ic>
    <path d="M.5 1.500h17v11H.5z" fill="#d8d8d8" stroke="#777" />
    <path d="M9 12.500V16M4.500 16.500h9" stroke="#777" strokeWidth="1.500" />
  </Ic>
);

const Yellow = ({ children }: { children?: React.ReactNode }) => (
  <Ic>
    <g stroke="#5a4200" strokeLinejoin="round">
      <path d="M.7 7.500 4 5.500V3L8 .800l4.500 2v4.500L17.300 10v4.500L12 17.300.7 11z" fill="#f7c51e" />
      <path d="M4 3 8 .800l4.500 2L9 5z" fill="#ffe999" />
      <path d="M9 9.300 12.500 7.300 17.300 10 12 12.700z" fill="#fbdd6a" />
      <path d="M9 5v4.300l3 3.400v4.600M.7 7.500l4 2" fill="none" strokeWidth=".8" />
    </g>
    {children}
  </Ic>
);
const AsmCube = () => (
  <g stroke="#17445c" strokeWidth=".9" strokeLinejoin="round">
    <path d="M7.500 3.500 12.500 1l5 2v6L13 12 7.500 9.500z" fill="#4596bf" />
    <path d="M7.500 3.500 12.500 1l5 2-4.500 2.500z" fill="#a5d6ec" />
    <path d="M13 5.500V12l4.500-3V3z" fill="#67b0d2" />
  </g>
);
const Asm = () => <Yellow><AsmCube /></Yellow>;
const FlexAsm = () => (
  <Ic>
    <path d="M.5 17v-4l4-1V6.500h6v6l5 .500 1 1v3z" fill="#fbd548" stroke="#4a3500" strokeWidth="1.200" />
    <path d="M10.500 2.500 14 .5h3.500v4.500l-2.500 3h-4.500z" fill="#8cc8e4" stroke="#17445c" />
    <path d="M10.500 2.500H15V8M15 2.500 17.500.500" stroke="#17445c" />
  </Ic>
);
const Folder = ({ children }: { children: React.ReactNode }) => (
  <Ic>
    <path d="M.7 16.500v-15h5l1.500 2.500h10v12.500z" fill="#dcdcdc" strokeWidth="1.200" />
    <path d="M2.500 6h13.500v10.500H2.500z" fill="#f7f7f7" stroke="#888" strokeWidth=".6" />
    {children}
  </Ic>
);
const History = () => (
  <Folder><circle cx="10.500" cy="11" r="4" fill="#fff" /><path d="M10.500 8.500v2.500l2 1.500" /><path d="M4 12q-.5-5 5-5M2 10.500l2 2.500 3-2" stroke="#2a84b1" strokeWidth="1.500" /></Folder>
);
const Sensors = () => (
  <Folder><circle cx="9.500" cy="11" r="4.200" fill="#fff" strokeWidth="1.200" /><path d="M9.500 11.500 12 9" /><path d="M9.500 12.500h4q-.5 3-4 3z" fill="#e02a20" stroke="none" /></Folder>
);
const Annotations = () => (
  <Folder><path d="m6 15 3.500-8.500L13 15M7.300 12.500h4.500M4.500 15.200h3M11 15.200h3.500" stroke="#1f7099" strokeWidth="1.500" /></Folder>
);
const Plane = () => (
  <Ic>
    <path d="M3.500 4 15.500 1v12.500l-12 3.500z" />
    <path d="M9.500 0v18" strokeDasharray="4 2" />
  </Ic>
);
const Origin = () => (
  <Ic>
    <path d="M3.500 2v13.500H16" strokeWidth="1.800" />
    <path d="M1 4.500 3.500.500 6 4.500zM14 13l4 2.500-4 2.500zM1.500 13.500h4v4h-4z" fill="#222" stroke="none" />
  </Ic>
);
const Mates = () => (
  <Ic>
    <g stroke="#3c83a8" strokeWidth="1.100">
      <path d="M5.500 5v7q-1 1.500-2 0V3.500q0-2.500 2-2.500t2 2.500V14q-.5 2.500-3.500 2.500T1 14V5" />
      <path d="M14.500 6.500v7q-1 1.500-2 0V5q0-2.500 2-2.500t2 2.500v10.500q-.5 2-3 2T10.500 15.500V6.500" />
    </g>
  </Ic>
);
const MirrorComp = () => (
  <Ic>
    <path d="M.7 3h4v4.500h3v8h-7z" fill="#f8d637" />
    <path d="M17.300 3h-4v4.500h-3v8h7z" fill="#e5e5e5" />
    <path d="M4 12h3.500v3.500H4z" fill="#3f93bb" stroke="none" />
    <path d="M9 0v18" strokeWidth="1.500" />
  </Ic>
);
const Config = () => (
  <Ic>
    <path d="M3.500.500v16M1.500.5h4v3h-4zM3.500 6.500H8M3.500 15.500h5M1.500 17.500h4" />
    <path d="m8 3 2-2h4v5l-1.500 2H8zM10 12l2-2h3.500v5L14 17h-4z" fill="#f3f3f3" />
  </Ic>
);
const Target = () => (
  <Ic><circle cx="9" cy="9" r="6" strokeWidth="1.600" /><path d="M9 0v18M0 9h18" strokeWidth="1.800" /></Ic>
);
const Cam = () => (
  <Ic>
    <path d="M.5 3 2 1.500h6V12L6.500 13h-6z" fill="#d9261f" stroke="#c01a14" />
    <path d="M5.500 5q-4-1-3 1.500 3 .5 2.500 2.500-1.500 1.500-3 0" stroke="#fff" />
    <path d="m9 12 3-10 3 10" strokeWidth="1.600" />
    <circle cx="12" cy="3" r="2" fill="#ddd" />
    <circle cx="13" cy="14" r="3.300" fill="#eee" stroke="#666" />
    <path d="M4 17.500q3-3 5-3" stroke="#d9261f" />
  </Ic>
);
const Funnel = () => (
  <Ic>
    <path d="M1 4h16L11 10.500V16l-3 1.500v-7z" fill="#e9e9e9" />
    <path d="M.5 1h17v2.500H.5z" fill="#4d9fc6" stroke="#17526f" />
  </Ic>
);
const Chevron = ({ d, c = "#444" }: { d: string; c?: string }) => (
  <svg width="10" height="12" viewBox="0 0 10 12" fill="none" stroke={c} strokeWidth="2" aria-hidden="true"><path d={d} /></svg>
);
const Library = () => (
  <Ic>
    <path d="M2.500 4 5.500 3 7 4v13l-1.500.5-3-2.500zM7 4l2-1 1.500 1v12.500L8.500 17.500 7 17zM10.500 4l2-1L15.500 4v10l-3 3-2-.5z" fill="#e4e4e4" />
    <path d="M2.500 4 7.500 1.500l2 .5M5.500 3 11 .8l2 .700M9 3l4-1.500 2.500 2.500M12.500 5v12M5.500 5v12" />
  </Ic>
);
const FolderOpen = () => (
  <Ic><path d="M.5 16V2h6l1.500 2h9V7" fill="#bbb" /><path d="M.7 17 5.500 7H20l-4.500 10z" fill="#eee" /></Ic>
);
const Palette = () => (
  <Ic>
    <path d="M.5 1h18v15H.5z" fill="#fff" strokeWidth="1.400" />
    <path d="M2.500 3h8v3h-8zM13 3h3.500v3H13zM6 8.500h3V11h2.500v3h-9v-3H6z" fill="#f8c922" stroke="#5a4200" />
    <path d="M14 9h3v7h-3z" fill="#999" />
  </Ic>
);
const Tag = () => (
  <Ic>
    <path d="M.5 3 9 .5l8.500 6V12L9 16.500.5 10z" fill="#d8d8d8" stroke="#555" strokeWidth="1.300" />
    <path d="M.5 3 9 8.500l8.500-2M9 8.500V16" stroke="#555" />
    <ellipse cx="8.500" cy="4.500" rx="2.500" ry="1.500" stroke="#444" />
  </Ic>
);

/* ---------- 3D model ---------- */

const Screw = ({ x, y }: { x: number; y: number }) => (
  <g>
    <ellipse cx={x} cy={y} rx="12" ry="8" fill="#7d7d7d" />
    <ellipse cx={x} cy={y} rx="5" ry="3" fill="#444" strokeWidth="2" />
  </g>
);

const Model = () => (
  <Scene viewBox="273 155 1640 833" role="img" aria-label="Disc sander assembly">
    <defs>
      <linearGradient id="motor" x1="0.650" y1="0.100" x2="0.300" y2="0.850">
        <stop offset="0" stopColor="#666" /><stop offset=".45" stopColor="#575757" /><stop offset="1" stopColor="#242424" />
      </linearGradient>
      <linearGradient id="cap" x1="0.800" y1="0" x2="0.200" y2="1">
        <stop offset="0" stopColor="#6a6a6a" /><stop offset=".5" stopColor="#555" /><stop offset="1" stopColor="#333" />
      </linearGradient>
      <linearGradient id="steel" x1="0" y1="0" x2="0.400" y2="1">
        <stop offset="0" stopColor="#fff" /><stop offset="1" stopColor="#777" />
      </linearGradient>
      <linearGradient id="bevel" x1="0" y1="1" x2="1" y2="0">
        <stop offset="0" stopColor="#222" /><stop offset=".4" stopColor="#777" /><stop offset="1" stopColor="#2a2a2a" />
      </linearGradient>
    </defs>

    {/* base and column */}
    <g transform="translate(900 500) scale(.33333)" stroke="#000" strokeWidth="3.500" strokeLinejoin="round">
      <path d="M88 806 397 985 397 994 88 816z" fill="#222" />
      <path d="M397 985 734 789 734 798 397 994z" fill="#333" />
      <path d="M88 806 425 610 734 789 397 985z" fill="#696969" />
      {[[115, 805], [397, 967], [706, 789]].map(([x, y]) => (
        <ellipse key={x} cx={x} cy={y} rx="10" ry="6" fill="#333" />
      ))}
      <path d="M655 778 700 800 655 826z" fill="#626262" />
      <path d="M640 770 653 770 653 834 640 842z" fill="#2b2b2b" />
      <path d="M328-60H470V925L328 780z" fill="#292929" />
      <path d="M470 70H497V925H470z" fill="#303030" />
      <path d="M497 70 638 0V845L490 930 497 920z" fill="#353535" />
      <path d="M328-60V782M638 40V845" stroke="#555" strokeWidth="7" />
      <path d="M331-60V782M635 40V845" strokeWidth="3.500" />
      <path d="M210 828 430 955 430 964 210 838z" fill="#222" />
      <path d="M210 828 250 803 474 931 430 955z" fill="#5f5f5f" />
      <path d="M258 748 482 872V928L474 931 256 800z" fill="#282828" />
      <path d="M258 742 484 868 484 928 474 922 474 872 258 752z" fill="#303030" />
      <path d="M222 820 440 946" strokeWidth="2.500" />

      {/* switch box */}
      <path d="M526 262 604 216 614 222 614 240 530 290z" fill="#1c1c1c" />
      <path d="M523 480 545 486 530 498z" fill="#111" />
      <path d="M512 300 Q512 284 525 280L612 234Q620 234 632 242L688 272Q697 278 697 292V452Q697 462 688 468L606 515Q592 522 582 514L520 478Q511 473 511 465z" fill="#121212" />
      <path d="M512 300 582 340V512L512 470z" fill="#0b0b0b" stroke="none" />
      <path d="M604 340 694 292V460L604 512z" fill="#171717" stroke="none" />
      <path d="M514 298 532 284 592 324 592 346 582 342z" fill="#2c2c2c" strokeWidth="1.500" />
      <path d="M592 324 680 272 695 286 695 292 606 346 592 346z" fill="url(#bevel)" strokeWidth="1.500" />
      <path d="M532 284 620 238 680 272 592 324z" fill="#414141" strokeWidth="3" />
      <path d="M582 342V512M604 346V512" />
      <path d="M640 342 655 336 680 350 682 370 662 394 635 385 629 365z" fill="#d30f0b" stroke="#300" strokeWidth="2" />
      <ellipse cx="663" cy="370" rx="17" ry="22" transform="rotate(25 663 370)" fill="#960503" stroke="#300" strokeWidth="3" />
      <path d="M640 425 655 419 680 432 682 452 662 476 635 468 629 448z" fill="#4c9f55" stroke="#041" strokeWidth="2" />
      <ellipse cx="663" cy="452" rx="17" ry="22" transform="rotate(25 663 452)" fill="#2f6b38" stroke="#031" strokeWidth="3" />
    </g>

    {/* head */}
    <g transform="translate(920 280) scale(.33333)" stroke="#000" strokeWidth="4" strokeLinejoin="round">
      <path d="M268 475 345 490 440 600 580 690 505 700 435 738 268 645z" fill="#2b2b2b" />
      <path d="M268 640 435 733 435 744 268 652z" fill="#3a3a3a" />
      <path d="M435 733 560 668 580 700 435 744z" fill="#353535" />
      <path d="M441 700 480 692 500 700 441 724z" fill="#7a7a7a" strokeWidth="2" />
      <path d="M268 572 342 487 400 520 350 570 350 640" fill="#262626" />
      <path d="M268 475V645" stroke="#555" strokeWidth="6" />
      <path d="M455 640 610 708 405 690 437 660z" fill="#272727" />
      <path d="M350 560 350 632Q352 662 385 668L425 668Q455 662 468 636L440 605z" fill="#2c2c2c" />
      <path d="M360 648Q372 662 400 662T456 648" fill="none" stroke="#111" strokeWidth="10" />
      <path d="M366 650Q374 656 390 655M410 664 436 664" fill="none" stroke="#888" strokeWidth="5" />

      {/* motor mount */}
      <path d="M178 412 258 368 410 460 400 512 340 487z" fill="#5a5a5a" />
      <path d="M178 412 345 492 335 500 178 421z" fill="#222" />
      <path d="M252 404 306 430" stroke="#0d0d0d" strokeWidth="11" strokeLinecap="round" />
      <path d="M282 438Q290 424 318 418L400 462 390 500z" fill="#555" />
      <path d="M282 444 396 510" />
      <ellipse cx="318" cy="431" rx="14" ry="10" fill="#ccc" />
      <ellipse cx="306" cy="438" rx="9" ry="6" fill="#888" strokeWidth="2" />
      <ellipse cx="364" cy="520" rx="10" ry="6" fill="#555" />

      {/* motor */}
      <path d="M115 260C113 160 190 64 260 67Q295 70 338 104L330 200 180 250z" fill="url(#cap)" />
      <path d="M160 225C165 150 230 88 300 88Q325 92 338 110L320 220 180 240z" fill="#505050" />
      <path d="M180 220C185 160 240 108 300 102L330 112 500 210 375 440 262 372 250 300z" fill="url(#motor)" />
      <path d="M170 225C176 150 235 98 300 96" fill="none" strokeWidth="3" />
      <path d="M115 256 190 298V412L115 378z" fill="#2e2e2e" />
      <path d="M190 298 265 250Q245 300 256 374L190 412z" fill="#393939" />
      <path d="M120 257 202 213 265 250 185 296z" fill="#676767" />
      <path d="M187 292 262 252" stroke="#888" strokeWidth="3" />
      <circle cx="185" cy="294" r="6" fill="#666" />

      {/* table */}
      <path d="M618 698 668 680 664 702Q645 716 622 708z" fill="#1a1a1a" />
      <path d="M998 482 1046 462 1046 478Q1030 496 1002 490z" fill="#1a1a1a" />
      <path d="M442 607 922 323 943 337 457 620z" fill="#484848" />
      <path d="M335 545 442 607 442 617 335 554z" fill="#333" />
      <path d="M340 545 820 265 922 323 442 605z" fill="#696969" />
      <path d="M457 617 610 702 610 713 457 627z" fill="#2e2e2e" />
      <path d="M610 702 1097 426 1097 436 610 713z" fill="#262626" />
      <path d="M457 617 943 337 1097 426 610 702z" fill="#696969" />
      <path d="M442 614 930 331" strokeWidth="6" />
      {[[457, 552], [835, 335], [540, 600], [918, 382], [622, 648], [1000, 429]].map(([x, y]) => (
        <Screw key={x} x={x} y={y} />
      ))}

      {/* disc guard */}
      <path d="M715 208C768 218 792 280 788 330L750 350 740 230z" fill="#393939" />
      <path d="M762 318 788 330 757 346z" fill="#6a6a6a" strokeWidth="2" />
      <path d="M370 486C362 330 490 158 612 160Q650 160 716 206L700 214 452 522 396 502z" fill="url(#cap)" />
      <path d="M380 492C374 340 500 172 612 168" fill="none" />
      <path d="M453 520C456 390 575 206 700 212 745 220 760 275 755 348z" fill="#5e0e0e" strokeWidth="5" />
      <circle cx="598" cy="412" r="2" fill="#fff" stroke="none" />

      {/* clamp lever */}
      <path d="M353 698 321 780" stroke="#222" strokeWidth="11" />
      <path d="M353 698 321 780" stroke="#a8a8a8" strokeWidth="6" />
      <path d="M358 688 398 667" stroke="#333" strokeWidth="23" strokeLinecap="round" />
      <path d="M358 688 398 667" stroke="#d6d6d6" strokeWidth="17" strokeLinecap="round" />
      <circle cx="321" cy="785" r="11" fill="url(#steel)" stroke="#333" strokeWidth="2" />
    </g>
  </Scene>
);

const AxisTriad = () => (
  <Triad width="60" height="70" viewBox="0 0 60 70" role="img" aria-label="Axes" fontFamily="Liberation Sans, sans-serif" fontSize="10">
    <path d="M14 46 33 36" stroke="#f6b0b0" strokeWidth="4" />
    <path d="m31 31 9 1-5 7z" fill="#f6b0b0" />
    <path d="m32 32 5 0-4 6z" fill="#a01010" />
    <path d="M14 47V22" stroke="#00b400" strokeWidth="4" />
    <path d="M10 24 14 14 18 24z" fill="#00a000" />
    <path d="m14 47 18 9" stroke="#0000a8" strokeWidth="4" />
    <path d="m31 52-3 7 12 2z" fill="#0000a0" />
    <circle cx="15" cy="46" r="2" fill="#c22" />
    <circle cx="13" cy="47" r="2" fill="#00c" />
    <text x="12" y="9" fill="#3ddc3d">Y</text>
    <text x="43" y="27" fill="#f06060">X</text>
    <text x="43" y="63" fill="#2020e0">Z</text>
  </Triad>
);

/* ---------- data ---------- */

const menus = ["File", "Edit", "View", "Insert", "Tools", "Window"];

type Node = { label: string; icon: React.ReactNode; open?: boolean };
const part = (label: string): Node => ({ label, icon: <Yellow />, open: true });
const tree: Node[] = [
  { label: "History", icon: <History />, open: true },
  { label: "Sensors", icon: <Sensors /> },
  { label: "Annotations", icon: <Annotations />, open: true },
  { label: "Front Plane", icon: <Plane /> },
  { label: "Top Plane", icon: <Plane /> },
  { label: "Right Plane", icon: <Plane /> },
  { label: "Origin", icon: <Origin /> },
  part("(f) GS-0252-P-007<1> (Default<<"),
  part("GS-0252-P-008<1> (Default<<De"),
  { label: "GS-0252-SA-002<1> (Default<Di", icon: <Asm />, open: true },
  part("GS-0252-P-006<1> (Default<<De"),
  { label: "GS-0252-SA-001<1> (Default<Di", icon: <FlexAsm />, open: true },
  part("GS-0252-P-004<2> -> (Default<<"),
  part("GS-0252-P-011<1> (Default<<De"),
  part("GS-0252-P-011<2> (8\" LONG<<D"),
  part("GS-0252-P-012<1> (Default<<De"),
  part("92141A030_TYPE 18-8 STAINLESS"),
  part("92141A030_TYPE 18-8 STAINLESS"),
  part("92141A030_TYPE 18-8 STAINLESS"),
  part("92240A583_18-8 STAINLESS STEE"),
  part("91240A030_MIL SPEC. 300 SERIES"),
  part("6272K220_STEEL ADJUSTABLE HA"),
  part("lock washer spring regular_aii<1>"),
  part("lock washer spring regular_aii<2>"),
  { label: "Mates", icon: <Mates />, open: true },
  { label: "MirrorComponent1", icon: <MirrorComp />, open: true },
];

/* ---------- parts ---------- */

type BigProps = { w: number; icon: React.ReactNode; label: string; off?: boolean; menu?: boolean };
const Big = ({ w, icon, label, off, menu }: BigProps) => (
  <BigButton $w={w} $off={off} disabled={off}>
    {icon}
    <BigLabel>{label}</BigLabel>
    {menu && <BigArrow><Caret c={off ? "#999" : "#404040"} /></BigArrow>}
  </BigButton>
);

type SplitProps = { icon: React.ReactNode; name: string; menu?: boolean; off?: boolean; w?: number; light?: boolean };
const Split = ({ icon, name, menu, off, w = 26, light }: SplitProps) => (
  <>
    <IconButton $w={w} aria-label={name} disabled={off}>{icon}</IconButton>
    {menu && (
      <IconButton $w={14} aria-label={`${name} options`} disabled={off}>
        <Caret c={light || off ? "#9a9a9a" : "#404040"} />
      </IconButton>
    )}
  </>
);

export default function App() {
  return (
    <App_>
      <Global />
      <TitleBar>
        <Brand>
          <Logo />
          <span><b>SOLID</b>WORKS</span>
        </Brand>
        <Menu>
          {menus.map((m) => <MenuItem key={m}>{m}</MenuItem>)}
          <Pin aria-label="Pin menu"><PinIcon /></Pin>
        </Menu>
        <QuickBar>
          <Split w={33} icon={<House />} name="Home" />
          <Split w={33} icon={<NewDoc />} name="New" menu />
          <Split w={33} icon={<Open />} name="Open" menu />
          <Split w={33} icon={<Save />} name="Save" menu />
          <Split w={33} icon={<Print />} name="Print" menu />
          <Split w={33} icon={<Undo />} name="Undo" menu off />
          <Split w={33} icon={<Undo flip />} name="Redo" menu off />
          <SelectBox>
            <IconButton $w={32} aria-label="Select"><Cursor /></IconButton>
            <IconButton $w={13} aria-label="Select options"><Caret /></IconButton>
          </SelectBox>
          <Split w={33} icon={<Traffic />} name="Rebuild" />
          <Split w={33} icon={<ListIcon />} name="File properties" />
          <Split w={33} icon={<Gear />} name="Options" menu />
        </QuickBar>
        <DocTitle>GS-0252-A-001</DocTitle>
        <SearchBox>
          <Prompt />
          <input type="text" placeholder="Search Commands" aria-label="Search Commands" />
          <IconButton $w={20} aria-label="Search"><Lens /></IconButton>
          <IconButton $w={18} aria-label="Search options"><Caret c="#777" /></IconButton>
        </SearchBox>
        <IconButton $w={41} aria-label="Account"><User /></IconButton>
        <IconButton $w={41} aria-label="Help"><Help /></IconButton>
        <IconButton $w={41} aria-label="Minimize"><Mini /></IconButton>
        <IconButton $w={41} aria-label="Restore"><Restore /></IconButton>
        <IconButton $w={38} aria-label="Close"><Close /></IconButton>
      </TitleBar>

      <ViewBar>
        <ViewGroup>
          <Grip />
          <Split w={27} icon={<NormalTo />} name="Normal to" />
          <Rule $m={4} />
          {Object.keys(faces).map((f) => (
            <Split key={f} w={27} icon={<ViewCube face={f} />} name={`${f} view`} />
          ))}
          <Split w={27} icon={<SolidCube kind="iso" />} name="Isometric" />
          <Split w={27} icon={<SolidCube kind="di" />} name="Trimetric" />
          <Split w={27} icon={<SolidCube kind="tri" />} name="Dimetric" />
          <Rule />
          <Split w={27} icon={<Scope />} name="View selector" />
        </ViewGroup>
      </ViewBar>

      <Ribbon>
        <Group $pad={4}>
          <Big w={56} icon={<SketchBase />} label="Sketch" menu />
          <Big w={109} icon={<SmartDim />} label="Smart Dimension" menu />
        </Group>
        <Group>
          <ToolGrid>
            <Split icon={<LineTool />} name="Line" menu />
            <Split icon={<CircleTool />} name="Circle" menu />
            <Split icon={<Spline />} name="Spline" menu />
            <Split icon={<PlaneTool />} name="Plane" />
            <Split icon={<RectTool />} name="Rectangle" menu />
            <Split icon={<ArcTool />} name="Arc" menu />
            <Split icon={<Ellipse />} name="Ellipse" menu />
            <Split icon={<TextTool />} name="Text" />
            <Split icon={<Slot />} name="Slot" menu />
            <Split icon={<Polygon />} name="Polygon" />
            <span />
            <Split icon={<Fillet />} name="Fillet" menu off />
            <Split icon={<PointTool />} name="Point" />
          </ToolGrid>
        </Group>
        <Group>
          <Big w={85} icon={<Trim />} label="Trim Entities" off menu />
          <Big w={106} icon={<Convert />} label="Convert Entities" menu />
          <Big w={54} icon={<Offset />} label={"Offset\nEntities"} off />
          <Big w={71} icon={<OffsetSurf />} label={"Offset On\nSurface"} />
          <RowList>
            <RowTool disabled><Mirror />Mirror Entities</RowTool>
            <RowTool disabled><Linear />Linear Sketch Pattern<span><Caret c="#999" /></span></RowTool>
            <RowTool disabled><Move />Move Entities<span><Caret c="#999" /></span></RowTool>
          </RowList>
        </Group>
        <Group $pad={2}>
          <Big w={157} icon={<Relations />} label="Display/Delete Relations" off menu />
          <Big w={50} icon={<Repair />} label={"Repair\nSketch"} off />
        </Group>
        <Group>
          <Big w={48} icon={<QuickSnap />} label="Qui..." off menu />
        </Group>
        <Group $last>
          <Big w={52} icon={<SketchBase><Bolt /></SketchBase>} label={"Rapid\nSketch"} />
          <Big w={69} icon={<Instant />} label="Instant2D" />
          <Big w={102} icon={<Contours />} label={"Shaded Sketch\nContours"} off />
        </Group>
        <RibbonEnd>
          <IconButton $w={14} $h={20} aria-label="Collapse ribbon"><Chevron d="M1 8l4-4 4 4" /></IconButton>
        </RibbonEnd>
      </Ribbon>

      <Work>
        <Side>
          <CommandTabs>
            <CommandTab $w={83}>Assembly</CommandTab>
            <CommandTab $w={67} $on>Sketch</CommandTab>
            <CommandTab $w={74}>Evaluate</CommandTab>
          </CommandTabs>
          <Splitter><Dot /></Splitter>
          <ManagerTabs>
            <ManagerTab $on aria-label="Feature tree"><Asm /></ManagerTab>
            <ManagerTab aria-label="Properties"><ListIcon head /></ManagerTab>
            <ManagerTab aria-label="Configurations"><Config /></ManagerTab>
            <ManagerTab aria-label="Dimensions"><Target /></ManagerTab>
            <ManagerTab aria-label="Display"><DisplayBall /></ManagerTab>
            <ManagerTab aria-label="CAM"><Cam /></ManagerTab>
            <IconButton $w={28} $h={24} aria-label="More tabs"><Chevron d="M4 1l5 5-5 5" /></IconButton>
          </ManagerTabs>
          <Filter>
            <button aria-label="Filter"><Funnel /><Caret /></button>
            <input type="text" aria-label="Filter tree" />
          </Filter>
          <TreePane>
            <ul>
              <TreeRow $root><Asm /><NodeLabel>{"GS-0252-A-001  (Default<Display Sta"}</NodeLabel></TreeRow>
              {tree.map((n, i) => (
                <TreeRow key={i}>
                  <Twist aria-label="Expand" disabled={!n.open}>
                    {n.open && <svg width="4" height="8" viewBox="0 0 4 8" aria-hidden="true"><path d="M0 0l4 4-4 4z" fill="#555" /></svg>}
                  </Twist>
                  {n.icon}
                  <NodeLabel>{n.label}</NodeLabel>
                </TreeRow>
              ))}
            </ul>
            <Rollback />
            <HScroll>
              <IconButton $w={21} $h={20} aria-label="Scroll left"><Chevron d="M7 2L3 6l4 4" c="#606060" /></IconButton>
              <Thumb />
              <IconButton $w={21} $h={20} aria-label="Scroll right"><Chevron d="M3 2l4 4-4 4" c="#606060" /></IconButton>
            </HScroll>
          </TreePane>
          <SideFoot />
          <Handle aria-label="Collapse panel"><Dot /></Handle>
        </Side>

        <Viewport>
          <Model />
          <HeadsUp>
            <Split icon={<ZoomFit />} name="Zoom to fit" />
            <Split icon={<ZoomFit area />} name="Zoom to area" />
            <Split icon={<Scope extra={<path d="M17.500 12.500h-3v-2.500L9.500 14l5 4v-2.500h3z" fill="#3c89b0" stroke="none" />} />} name="Previous view" />
            <Split icon={<Section />} name="Section view" />
            <Split icon={<DynAnno />} name="Annotation views" />
            <Split icon={<Orient />} name="View orientation" menu light />
            <Split icon={<DisplayStyle />} name="Display style" menu light />
            <Split icon={<Eye />} name="Hide or show items" menu light />
            <Split icon={<EditLook />} name="Edit appearance" />
            <Split icon={<SceneIcon />} name="Apply scene" menu light />
            <Split icon={<Screen />} name="View settings" menu light />
          </HeadsUp>
          <DocControls>
            <IconButton aria-label="Previous pane"><PaneArrow /></IconButton>
            <IconButton aria-label="Next pane"><PaneArrow right /></IconButton>
            <IconButton aria-label="Minimize document"><Mini c="#999" /></IconButton>
            <IconButton aria-label="Restore document"><Restore c="#999" /></IconButton>
            <IconButton aria-label="Close document"><Close c="#999" /></IconButton>
          </DocControls>
          <TaskPane>
            <TaskButton $on aria-label="Resources"><House /></TaskButton>
            <TaskButton aria-label="Design library"><Library /></TaskButton>
            <TaskButton aria-label="File explorer"><FolderOpen /></TaskButton>
            <TaskButton aria-label="View palette"><Palette /></TaskButton>
            <TaskButton aria-label="Appearances"><Ic><Ball /></Ic></TaskButton>
            <TaskButton aria-label="Custom properties"><ListIcon head /></TaskButton>
          </TaskPane>
          <AxisTriad />
        </Viewport>
      </Work>

      <SheetBar>
        <SheetNav>
          {["M5 1v10M12 1v10L6 6z", "M10 1v10L4 6z", "M4 1v10l6-5z", "M9 1v10M2 1v10l6-5z"].map((d, i) => (
            <SheetStep key={d} aria-label={["First", "Previous", "Next", "Last"][i]}>
              <svg width="14" height="12" viewBox="0 0 14 12" fill="#85859c" stroke="#85859c" aria-hidden="true"><path d={d} /></svg>
            </SheetStep>
          ))}
        </SheetNav>
        <SheetTab $w={76} $on>Model</SheetTab>
        <SheetTab $w={89}>3D Views</SheetTab>
        <SheetTab $w={144}>Motion Study 1</SheetTab>
      </SheetBar>
      <Status>
        <Product>SOLIDWORKS Premium 2021 SP0.0</Product>
        <StatusCell $w={105}>Fully Defined</StatusCell>
        <StatusCell $w={236}>Editing Assembly</StatusCell>
        <StatusMenu>Custom<Caret up /></StatusMenu>
        <IconButton $w={12} $h={16} aria-label="Units"><Tag /></IconButton>
      </Status>
    </App_>
  );
}
